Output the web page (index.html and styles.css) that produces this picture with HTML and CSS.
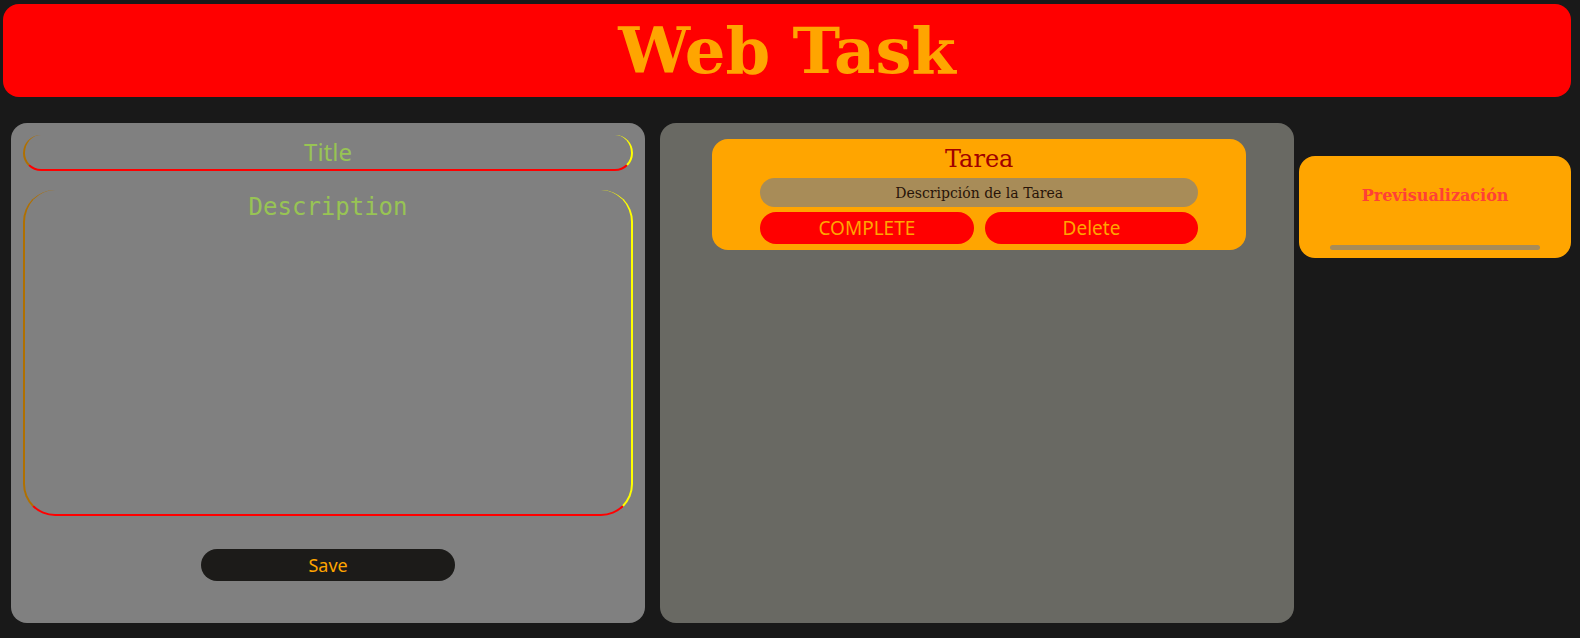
FILE: index.html
```html
<!DOCTYPE html>
<html lang="es">
<head>
  <meta charset="utf-8">
  <title>Web Task</title>
  <link rel="stylesheet" href="styles.css">
</head>
<body>
  <header class="banner">
    <h1 class="banner-title">Web Task</h1>
  </header>
  <main class="board">
    <form class="panel task-form">
      <input class="field title-field" type="text" placeholder="Title" aria-label="Title">
      <textarea class="field description-field" placeholder="Description" aria-label="Description"></textarea>
      <button class="button save-button" type="button">Save</button>
    </form>
    <section class="panel task-list">
      <article class="card task">
        <h2 class="task-title">Tarea</h2>
        <p class="task-description">Descripción de la Tarea</p>
        <div class="task-actions">
          <button class="button" type="button">COMPLETE</button>
          <button class="button" type="button">Delete</button>
        </div>
      </article>
    </section>
    <aside class="card preview">
      <h2 class="preview-title">Previsualización</h2>
      <div class="preview-description"></div>
    </aside>
  </main>
</body>
</html>
```

FILE: styles.css
```css
* {
  box-sizing: border-box;
}

body {
  margin: 0;
  padding: 4px 9px 15px 3px;
  background: #191919;
  font-family: "DejaVu Serif", serif;
}

h1, h2, p {
  margin: 0;
  font-weight: normal;
}

.banner {
  padding: 9px;
  border-radius: 16px;
  background: red;
  text-align: center;
}

.banner-title {
  color: orange;
  font-size: 64px;
  font-weight: bold;
  line-height: 75px;
}

.board {
  display: grid;
  grid-template-columns: 7fr 5px 7fr 3fr;
  align-items: start;
  gap: 5px;
  margin-top: 26px;
  padding-left: 8px;
}

.panel {
  min-width: 0;
  min-height: 500px;
  border-radius: 16px;
}

.card {
  border-radius: 16px;
  background: orange;
  text-align: center;
}

.task-form {
  grid-column: 1;
  display: flex;
  flex-direction: column;
  align-items: center;
  padding: 12px;
  background: gray;
}

.field {
  width: 100%;
  border: 2px solid;
  border-width: 0 2px 2px;
  border-color: transparent yellow red #b07000;
  background: transparent;
  color: #98c454;
  font-size: 24px;
  text-align: center;
  outline: none;
}

.field::placeholder {
  color: #98c454;
  opacity: 1;
}

.title-field {
  height: 36px;
  padding: 0 0 2px;
  border-radius: 18px;
  font-family: "Noto Sans", sans-serif;
}

.description-field {
  display: block;
  height: 326px;
  margin-top: 19px;
  padding: 3px;
  border-radius: 32px;
  font-family: "DejaVu Sans Mono", monospace;
  resize: none;
}

.button {
  flex: 1;
  height: 32px;
  padding: 0;
  border: 0;
  border-radius: 16px;
  background: red;
  color: orange;
  font-family: "Noto Sans", sans-serif;
  font-size: 19px;
}

.save-button {
  flex: none;
  width: 41.5%;
  margin-top: 33px;
  background: #1c1b19;
  font-size: 18px;
}

.task-list {
  grid-column: 3;
  padding: 16px 48px 16px 52px;
  background: #696963;
}

.task {
  padding: 6px 48px;
}

.task-title {
  color: #a00000;
  font-size: 24px;
  line-height: 29px;
}

.task-description {
  margin-top: 4px;
  padding-top: 1px;
  border-radius: 15px;
  background: #a88c58;
  color: #281408;
  font-size: 14px;
  line-height: 28px;
}

.task-actions {
  display: flex;
  gap: 11px;
  margin-top: 5px;
}

.preview {
  grid-column: 4;
  min-width: 0;
  margin-top: 33px;
  padding: 30px 31px 8px;
}

.preview-title {
  color: #ff4136;
  font-size: 16px;
  font-weight: bold;
  line-height: 19px;
}

.preview-description {
  height: 5px;
  margin-top: 40px;
  border-radius: 3px;
  background: #a88c58;
}
```
